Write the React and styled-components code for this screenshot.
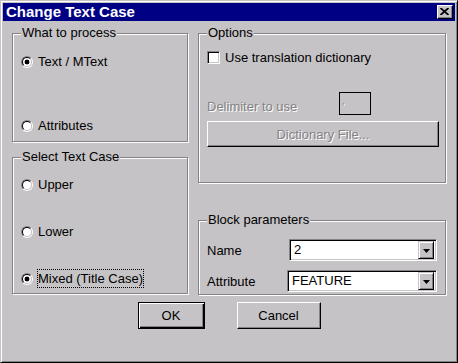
import React from 'react'
import styled, { createGlobalStyle } from 'styled-components'

const Global = createGlobalStyle`
  body {
    margin: 0;
    background: #c6c3c6;
  }
`

const face = '#c6c3c6'
const shadow = '#848284'

export default function App() {
  return (
    <>
      <Global />
      <Window>
        <TitleBar>
          <Title>Change Text Case</Title>
          <CloseButton>
            <svg width='9' height='7' viewBox='0 0 9 7'>
              <path d='M0.5 0 L8.5 7 M8.5 0 L0.5 7' stroke='#000' strokeWidth='1.8' />
            </svg>
          </CloseButton>
        </TitleBar>

        <Body>
          <Column>
            <Group $h={109} $pad='19px 8px 8px 8px'>
              <Legend>What to process</Legend>
              <OptionRow>
                <Radio $checked />
                <span>Text / MText</span>
              </OptionRow>
              <OptionRow>
                <Radio />
                <span>Attributes</span>
              </OptionRow>
            </Group>

            <Group $h={137} $pad='18px 8px 7px 8px' $top={15}>
              <Legend>Select Text Case</Legend>
              <OptionRow>
                <Radio />
                <span>Upper</span>
              </OptionRow>
              <OptionRow>
                <Radio />
                <span>Lower</span>
              </OptionRow>
              <OptionRow>
                <Radio $checked />
                <Focused>Mixed (Title Case)</Focused>
              </OptionRow>
            </Group>
          </Column>

          <Column>
            <Group $h={150} $pad='15px 6px 0 8px' $start>
              <Legend>Options</Legend>
              <OptionRow>
                <CheckBox />
                <span>Use translation dictionary</span>
              </OptionRow>
              <DelimRow>
                <DisabledText $w={132}>Delimiter to use</DisabledText>
                <SmallEdit>
                  <DisabledText>,</DisabledText>
                </SmallEdit>
              </DelimRow>
              <Button $w={232} $h={26} $top={6} disabled>
                <DisabledText>Dictionary File...</DisabledText>
              </Button>
            </Group>

            <Group $h={75} $pad='18px 8px 0 8px' $top={37} $start>
              <Legend>Block parameters</Legend>
              <ParamRow>
                <ParamLabel $w={82}>Name</ParamLabel>
                <Combo $w={148}>
                  <ComboText>2</ComboText>
                  <DropButton>
                    <svg width='7' height='4' viewBox='0 0 7 4'>
                      <path d='M0 0 H7 L3.5 4 Z' fill='#000' />
                    </svg>
                  </DropButton>
                </Combo>
              </ParamRow>
              <ParamRow $top={9}>
                <ParamLabel $w={80}>Attribute</ParamLabel>
                <Combo $w={150}>
                  <ComboText>FEATURE</ComboText>
                  <DropButton>
                    <svg width='7' height='4' viewBox='0 0 7 4'>
                      <path d='M0 0 H7 L3.5 4 Z' fill='#000' />
                    </svg>
                  </DropButton>
                </Combo>
              </ParamRow>
            </Group>
          </Column>
        </Body>

        <ButtonRow>
          <Button $w={67} $h={27} $default>OK</Button>
          <Button $w={84} $h={27}>Cancel</Button>
        </ButtonRow>
      </Window>
    </>
  )
}

const Window = styled.div`
  width: 458px;
  height: 363px;
  box-sizing: border-box;
  padding: 2px;
  background: ${face};
  border: 1px solid;
  border-color: ${face} #000 #000 ${face};
  box-shadow: inset 1px 1px 0 #fff, inset -1px -1px 0 ${shadow};
  font-family: 'Liberation Sans', Arial, sans-serif;
  font-size: 13px;
  color: #000;
  display: flex;
  flex-direction: column;
`

const TitleBar = styled.div`
  height: 18px;
  background: #000084;
  display: flex;
  align-items: center;
  justify-content: space-between;
  padding: 0 2px 0 3px;
`

const Title = styled.div`
  color: #fff;
  font-weight: bold;
  font-size: 15px;
  line-height: 18px;
`

const CloseButton = styled.div`
  width: 16px;
  height: 14px;
  box-sizing: border-box;
  background: ${face};
  border: 1px solid;
  border-color: #fff #000 #000 #fff;
  box-shadow: inset -1px -1px 0 ${shadow};
  display: flex;
  align-items: center;
  justify-content: center;
  padding: 0 1px 1px 0;
`

const Body = styled.div`
  display: grid;
  grid-template-columns: 176px 248px;
  column-gap: 10px;
  padding: 12px 0 0 9px;
`

const Column = styled.div`
  display: flex;
  flex-direction: column;
`

const Group = styled.div`
  position: relative;
  height: ${p => p.$h}px;
  margin-top: ${p => p.$top || 0}px;
  box-sizing: border-box;
  border: 1px solid ${shadow};
  box-shadow: inset 1px 1px 0 #fff, 1px 1px 0 #fff;
  padding: ${p => p.$pad};
  display: flex;
  flex-direction: column;
  justify-content: ${p => (p.$start ? 'flex-start' : 'space-between')};
`

const Legend = styled.div`
  position: absolute;
  top: -9px;
  left: 8px;
  padding: 0 1px;
  line-height: 16px;
  background: ${face};
  white-space: nowrap;
`

const OptionRow = styled.div`
  display: flex;
  align-items: center;
  gap: 5px;
  height: 16px;
  white-space: nowrap;
`

const Radio = styled.span`
  position: relative;
  flex-shrink: 0;
  width: 12px;
  height: 12px;
  box-sizing: border-box;
  border-radius: 50%;
  border: 1px solid;
  border-color: ${shadow} #fff #fff ${shadow};
  margin-top: 2px;
  &::before {
    content: '';
    position: absolute;
    inset: 0;
    border-radius: 50%;
    border: 1px solid;
    border-color: #000 ${face} ${face} #000;
    background: ${p =>
      p.$checked
        ? 'radial-gradient(circle at 50% 50%, #000 0 2.2px, #fff 2.7px)'
        : '#fff'};
  }
`

const Focused = styled.span`
  border: 1px dotted #000;
  padding: 1px 0;
  margin-left: -1px;
  line-height: 15px;
`

const CheckBox = styled.span`
  flex-shrink: 0;
  width: 13px;
  height: 13px;
  box-sizing: border-box;
  background: #fff;
  border: 1px solid;
  border-color: ${shadow} #fff #fff ${shadow};
  box-shadow: inset 1px 1px 0 #000, inset -1px -1px 0 ${face};
`

const DelimRow = styled.div`
  display: flex;
  margin-top: 27px;
  height: 23px;
`

const DisabledText = styled.span`
  color: ${shadow};
  text-shadow: 1px 1px 0 #fff;
  white-space: nowrap;
  ${p => (p.$w ? `width: ${p.$w}px; padding-top: 7px;` : '')}
`

const SmallEdit = styled.div`
  width: 32px;
  height: 23px;
  box-sizing: border-box;
  border: 1px solid #000;
  padding: 3px 0 0 2px;
  font-size: 9px;
`

const Button = styled.button`
  width: ${p => p.$w}px;
  height: ${p => p.$h}px;
  margin-top: ${p => p.$top || 0}px;
  box-sizing: border-box;
  padding: 0;
  background: ${face};
  font-family: inherit;
  font-size: 13px;
  color: #000;
  border: 1px solid;
  border-color: ${p => (p.$default ? '#000' : '#fff #000 #000 #fff')};
  box-shadow: ${p =>
    p.$default
      ? `inset 1px 1px 0 #fff, inset -1px -1px 0 #000, inset -2px -2px 0 ${shadow}`
      : `inset -1px -1px 0 ${shadow}`};
`

const ParamRow = styled.div`
  display: flex;
  align-items: center;
  margin-top: ${p => p.$top || 0}px;
`

const ParamLabel = styled.span`
  width: ${p => p.$w}px;
`

const Combo = styled.div`
  width: ${p => p.$w}px;
  height: 22px;
  box-sizing: border-box;
  background: #fff;
  border: 1px solid;
  border-color: ${shadow} #fff #fff ${shadow};
  box-shadow: inset 1px 1px 0 #000, inset -1px -1px 0 ${face};
  padding: 2px 2px 2px 4px;
  display: flex;
  align-items: center;
`

const ComboText = styled.span`
  flex: 1;
  line-height: 16px;
`

const DropButton = styled.div`
  width: 16px;
  height: 18px;
  box-sizing: border-box;
  background: ${face};
  border: 1px solid;
  border-color: ${face} #000 #000 ${face};
  box-shadow: inset 1px 1px 0 #fff, inset -1px -1px 0 ${shadow};
  display: flex;
  align-items: center;
  justify-content: center;
  padding-top: 1px;
`

const ButtonRow = styled.div`
  display: flex;
  justify-content: center;
  gap: 32px;
  margin-top: 7px;
`
